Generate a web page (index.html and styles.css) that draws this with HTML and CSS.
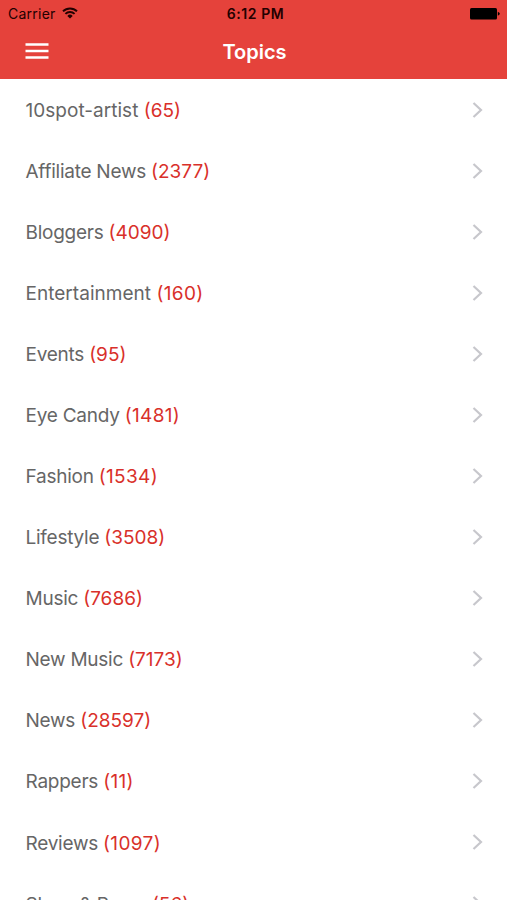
FILE: index.html
```html
<!DOCTYPE html>
<html lang="en">
<head>
<meta charset="utf-8">
<title>Topics</title>
<link rel="stylesheet" href="styles.css">
</head>
<body>
<header class="header">
  <div class="status">
    <div class="carrier"><span>Carrier</span>
      <svg class="wifi" viewBox="0 0 16 12"><path d="M1 4.3a10 10 0 0 1 14 0M3.4 6.9a6.5 6.5 0 0 1 9.2 0" fill="none" stroke="#200" stroke-width="1.9"/><path d="M5.3 8.9a3.9 3.9 0 0 1 5.4 0L8 11.6z" fill="#200"/></svg>
    </div>
    <time class="time">6:12 PM</time>
    <svg class="battery" viewBox="0 0 30 12"><rect width="27" height="11.5" rx="1.5"/><path d="M27.8 3.8q4 2 0 4z"/></svg>
  </div>
  <nav class="nav">
    <svg class="menu" viewBox="0 0 24 18"><path d="M.5 2.5h23M.5 9h23M.5 15.4h23" stroke="#fff" stroke-width="2.5"/></svg>
    <h1 class="title">Topics</h1>
  </nav>
</header>
<main class="list" id="list"></main>
<script src="script.js"></script>
</body>
</html>
```
FILE: styles.css
```css
* { box-sizing: border-box; }
body { margin: 0; height: 900px; overflow: hidden; background: #fff; font-family: Inter, "Liberation Sans", sans-serif; }
.header { height: 79px; background: #e5423b; }
.status { display: grid; grid-template-columns: 1fr auto 1fr; align-items: center; height: 27px; padding: 0 7px 0 8px; color: #200; }
.carrier { display: flex; align-items: center; gap: 6px; font-size: 14px; letter-spacing: .24px; }
.wifi { width: 16px; height: 12px; margin-top: -2px; }
.time { padding-left: 3px; font-size: 14px; font-weight: 600; letter-spacing: .55px; }
.battery { width: 30px; height: 12px; justify-self: end; }
.nav { display: grid; grid-template-columns: 1fr auto 1fr; align-items: center; height: 50px; padding: 0 25px; }
.menu { width: 24px; height: 18px; margin-top: -2px; }
.title { margin: 0; padding-left: 2px; color: #fff; font-size: 20px; font-weight: 600; }
.row { display: flex; align-items: center; justify-content: space-between; height: 61.08px; padding: 0 24px 0 25.5px; font-size: 19px; color: #666; }
.label { padding-top: 1.2px; letter-spacing: -.25px; }
.label-wide { letter-spacing: .03px; }
.count { color: #d9302a; letter-spacing: 0; }
.count-wide { letter-spacing: .35px; }
.chevron { width: 11px; height: 18px; fill: none; stroke: #c7c7cc; stroke-width: 2.2; }
```
FILE: script.js
```javascript
const topics = [["10spot-artist",65],["Affiliate News",2377],["Bloggers",4090],["Entertainment",160],["Events",95],["Eye Candy",1481],["Fashion",1534],["Lifestyle",3508],["Music",7686],["New Music",7173],["News",28597],["Rappers",11],["Reviews",1097],["Show & Prove",56]];
const wideNames = ["10spot-artist", "Entertainment"];
document.getElementById("list").innerHTML = topics.map(([name, count]) =>
  `<div class="row"><span class="label${wideNames.includes(name) ? " label-wide" : ""}">${name.replace("&", "&amp;")} <span class="count${/^1/.test(count) ? " count-wide" : ""}">(${count})</span></span><svg class="chevron" viewBox="0 0 11 18"><path d="M1.5 2l7.5 7-7.5 7"/></svg></div>`).join("");
```
